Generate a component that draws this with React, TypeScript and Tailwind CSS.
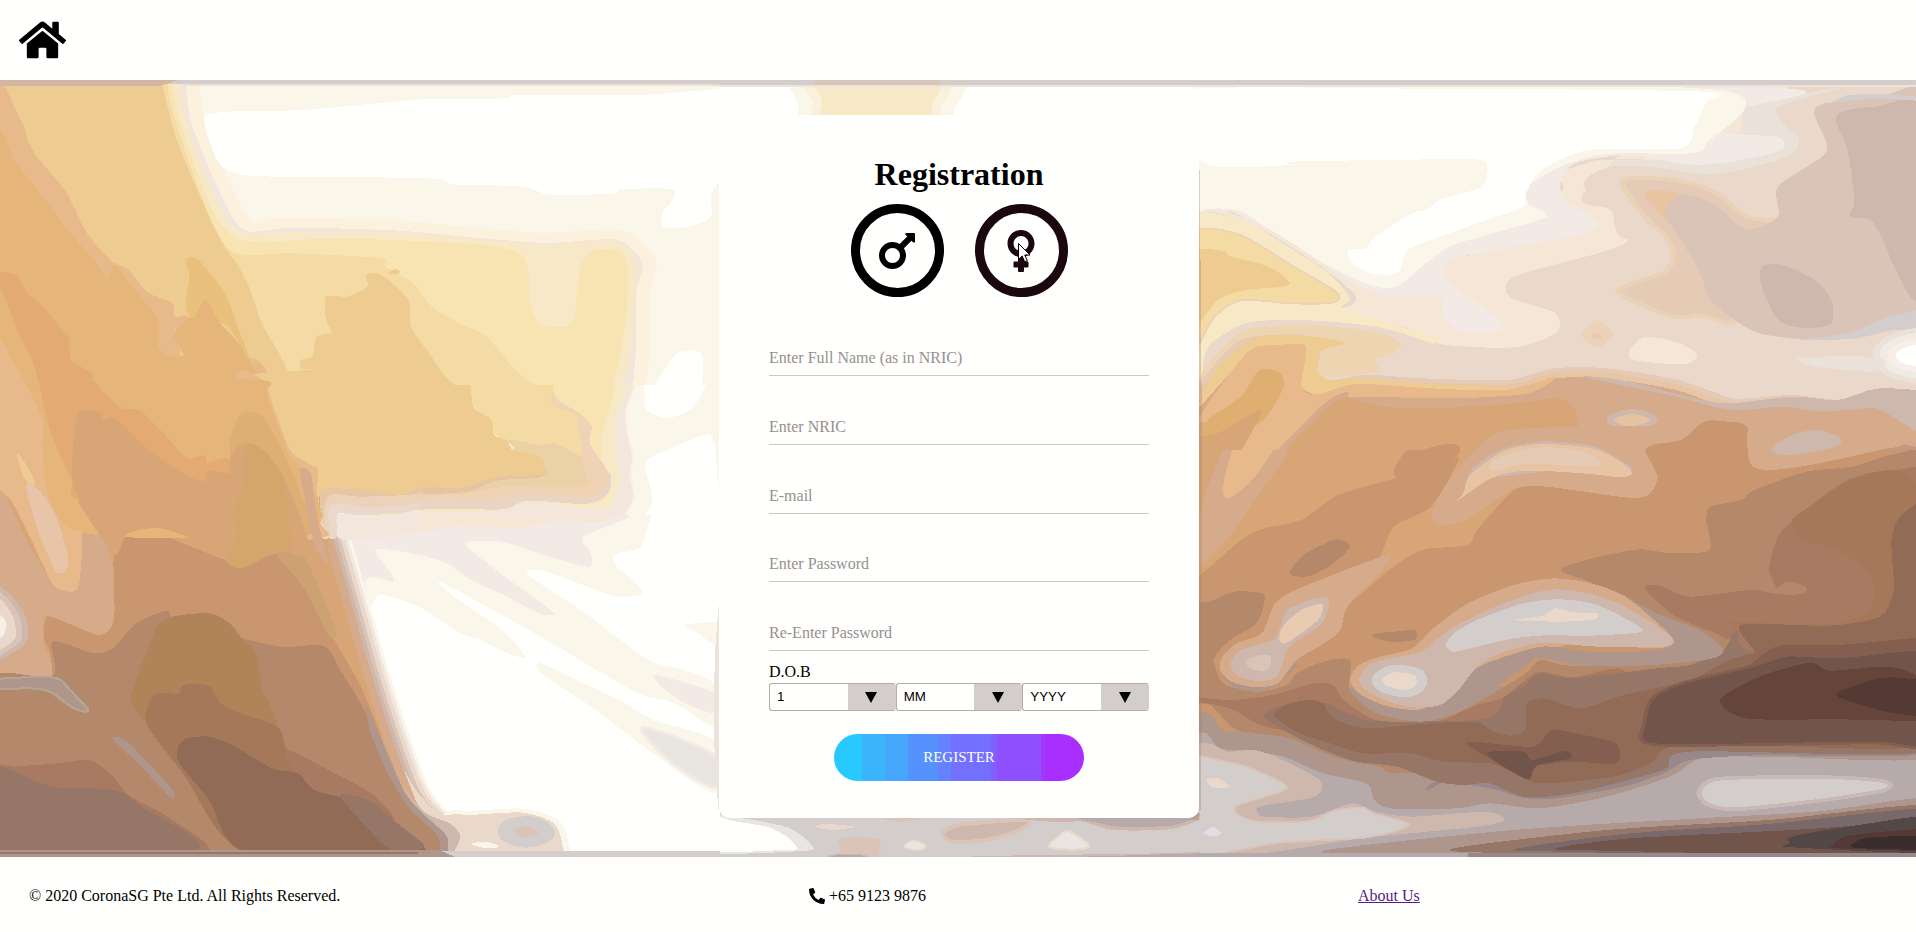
import React from "react";
import { FaHome, FaMars, FaVenus, FaPhoneAlt } from "react-icons/fa";

type Band = [string, number];

/* Closed Catmull-Rom curve through a flat "x,y x,y" list. */
function curve(points: string): string {
  const p = points.trim().split(/\s+/).map((s) => s.split(",").map(Number));
  const n = p.length;
  const t = 0.13;
  let d = `M${p[0][0]} ${p[0][1]}`;
  for (let i = 0; i < n; i++) {
    const a = p[(i - 1 + n) % n];
    const b = p[i];
    const c = p[(i + 1) % n];
    const e = p[(i + 2) % n];
    d += `C${b[0] + (c[0] - a[0]) * t} ${b[1] + (c[1] - a[1]) * t} ${c[0] - (e[0] - b[0]) * t} ${c[1] - (e[1] - b[1]) * t} ${c[0]} ${c[1]}`;
  }
  return d + "Z";
}

/* A filled blob with optional bands of colour around it, widest first. */
function B({ c, p, s = [] }: { c: string; p: string; s?: Band[] }) {
  const d = curve(p);
  return (
    <>
      {s.map(([color, w], i) => (
        <path key={i} d={d} fill={color} stroke={color} strokeWidth={w} strokeLinejoin="round" />
      ))}
      <path d={d} fill={c} />
    </>
  );
}

function UpperLeft() {
  return (
    <svg x="0" y="60" width="720" height="390" viewBox="0 0 1568 1170" preserveAspectRatio="none">
      <rect width="1568" height="1170" fill="#fbf6ea" />
      <B c="#f3e5db" s={[["#fbf1dc", 60]]} p="400,0 405,80 415,180 450,310 480,400 510,480 545,515 640,503 870,512 1010,530 1140,545 1200,549 1340,538 1385,580 1400,620 1385,700 1385,850 1380,950 1365,1060 1372,1250 -60,1250 -60,0" />
      <B c="#f7e8c8" p="385,0 392,80 405,180 440,320 470,410 500,490 545,522 640,516 870,518 1010,535 1140,550 1200,554 1335,542 1375,580 1388,620 1380,750 1372,900 1345,1020 1340,1250 -60,1250 -60,0" />
      <B c="#f7e4b2" p="370,0 375,80 390,170 430,340 470,470 510,530 560,545 700,537 860,540 1060,555 1130,580 1150,620 1155,730 1180,795 1245,790 1260,650 1275,590 1310,567 1350,575 1367,620 1365,750 1352,880 1330,1000 1310,1100 1308,1250 -60,1250 -60,0" />
      <B c="#ead2ad" p="1195,1000 1260,1050 1288,1100 1275,1130 1308,1200 1200,1250 1100,1130" />
      <B c="#f4dba5" p="360,0 365,80 380,170 420,340 460,480 500,570 545,585 640,580 830,595 840,620 900,670 940,740 1000,790 1060,830 1130,940 1200,1010 1260,1065 1265,1250 -60,1250 -60,0" />
      <B c="#eecb91" p="350,0 355,80 385,240 430,390 480,540 520,620 548,700 570,790 612,890 640,970 670,978 680,930 655,925 655,900 680,890 690,830 722,818 710,780 710,710 757,710 800,680 797,645 830,645 890,720 895,800 940,890 970,950 1030,1020 1035,1045 1075,1075 1080,1120 1170,1180 1180,1250 -60,1250 -60,0" />
      <B c="#eecb91" p="845,640 860,627 872,636 860,643" />
      <B c="#e7b98b" p="-20,110 45,180 60,240 80,290 130,370 150,410 190,520 240,600 280,630 320,695 375,730 380,768 410,770 410,805 378,810 400,850 400,890 560,900 600,1020 655,1200 500,1250 -40,1250" />
      <B c="#e5b57a" p="-20,240 40,320 110,440 160,530 205,600 235,650 250,615 300,700 345,780 345,860 375,890 400,885 378,820 415,770 448,718 480,790 520,850 550,920 580,1000 610,1110 640,1250 -40,1250" />
      <B c="#e9c07c" p="404,600 430,598 490,700 520,810 548,910 500,805 475,780 448,718 420,775 404,735 412,650" />
      <B c="#e3ab73" p="-20,640 35,645 60,700 95,740 135,810 150,830 155,900 200,940 220,1000 300,1050 360,1110 410,1170 440,1250 140,1250 100,1050 70,900 40,820 10,710" />
      <B c="#d8a676" p="175,1060 250,1075 300,1140 380,1250 160,1250 165,1130" />
      <B c="#e7b98b" p="-20,820 30,910 80,1040 135,1250 -20,1250" />
      <B c="#fffffd" p="450,165 510,154 660,150 820,130 920,118 1100,115 1130,105 1400,104 1700,90 1600,300 1550,400 1548,470 1500,500 1445,502 1443,455 1460,430 1465,388 1350,388 1340,400 1200,405 1140,380 990,373 960,358 870,353 600,350 520,343 480,315 460,260 447,200" />
      <B c="#fffffd" p="1475,880 1527,882 1528,980 1500,1050 1440,1075 1405,1040 1420,990" />
      <path d="M0 60H1568V72H0Z" fill="#d3cdcb" />
      <path d="M400 72H1568V79H400Z" fill="#ebe0d6" />
      <path d="M0 60H390L350 77H0Z" fill="#d3b5a5" />
    </svg>
  );
}

function LowerLeft() {
  return (
    <svg x="0" y="450" width="820" height="482" viewBox="0 30 1568 1446" preserveAspectRatio="none">
      <rect width="1568" height="1500" fill="#fffffd" />
      <B c="#fbf6ea" p="600,-20 1400,-60 1375,5 1240,40 1235,160 1248,200 1225,320 1180,340 1175,370 1225,445 1222,465 1175,468 1080,415 1030,390 1010,405 1120,520 1240,660 1310,690 1368,735 1368,860 1290,790 1220,760 1120,670 1000,560 845,428 860,460 960,570 1005,650 970,640 920,600 880,580 800,500 725,465 700,520 650,400" />
      <B c="#fbf6ea" p="1035,670 1130,740 1190,785 1250,840 1368,905 1368,1060 1240,930 1130,800 1035,700" />
      <B c="#fbf6ea" p="1310,555 1375,550 1375,620 1335,580" />
      <B c="#f3eae5" p="1255,705 1368,760 1368,820 1310,790 1265,740" />
      <B c="#e9e5e1" s={[["#f3eae5", 14]]} p="1230,868 1300,900 1368,955 1368,1040 1290,970" />
      <B c="#f3eae5" p="640,240 1190,215 1115,290 1130,340 1125,380 1050,350 960,305 890,310 940,380 1000,450 1060,520 1030,520 970,470 900,420 840,360 720,327 750,405 750,425 700,420 690,600 640,400" />
      <B c="#f5e6d6" p="600,-20 1210,-20 1205,90 1215,150 1190,200 1150,245 1060,240 1000,265 870,260 740,290 650,265 600,200" />
      <B c="#f7e8c6" p="560,-20 1180,-20 1180,120 1160,180 1130,198 1010,200 940,217 820,205 720,238 640,218 600,200" />
      <B c="#ead4c3" p="560,-20 1150,-20 1168,100 1150,165 1090,185 1000,182 930,207 800,205 640,218 605,210 590,100" />
      <B c="#f0d3ab" p="560,-20 1140,-20 1160,100 1140,140 960,160 900,180 770,185 680,165 640,175 600,200" />
      <B c="#eecb91" p="540,-20 975,-20 980,15 1045,70 1040,102 950,118 880,145 740,152 640,148 610,160 590,80" />
      <B
        c="#d8a676"
        s={[["#fbf6ea", 100], ["#f3e6dc", 88], ["#ead8cb", 76], ["#dac3b7", 60], ["#ceb8ad", 46], ["#d5ab8c", 32]]}
        p="560,200 580,100 592,130 600,190 625,320 645,430 665,540 690,680 712,790 735,900 765,1030 790,1100 835,1180 838,1260 -80,1260 -80,-60 300,-60"
      />
      <B c="#d8a676" p="130,-30 540,-30 592,130 625,320 440,330 280,270 150,180" />
      <B c="#d5a66c" p="435,40 480,10 520,30 545,280 560,350 460,370 425,355 460,290 445,150" />
      <B c="#d5ab8c" p="-40,60 20,200 60,330 110,440 150,430 155,200 200,300 220,420 215,550 190,585 130,550 85,530 85,620 100,710 -40,710" />
      <B c="#e7b98b" p="-40,-30 100,-30 140,110 155,200 157,330 150,440 130,455 100,430 60,300 20,180 -30,100" />
      <B c="#eecb91" p="32,45 40,50 66,120 60,140 45,110" />
      <B c="#e8c4a8" p="50,140 65,135 105,220 130,350 125,395 105,390 70,260" />
      <B c="#c9966f" p="245,285 300,280 350,310 430,360 460,372 530,342 560,380 595,430 640,600 690,740 740,950 760,1240 120,1240 100,690 85,600 90,530 130,550 190,585 218,540 218,340" />
      <B c="#cda272" p="545,280 580,340 640,560 630,590 580,440 530,345" />
      <B c="#b4896b" p="100,605 180,640 220,620 260,550 320,512 335,540 450,590 540,620 620,618 650,690 690,790 730,930 770,1090 810,1240 -40,1240 -40,730 100,710" />
      <B c="#b08359" p="300,560 330,530 400,520 440,550 460,590 490,640 500,740 530,860 450,870 300,880 280,850 250,780 265,700 290,600" />
      <B c="#a6785a" p="295,765 340,760 350,735 400,738 430,800 530,860 550,930 620,1000 700,1060 740,1120 800,1240 470,1240 350,1000 280,850" />
      <B c="#a87a61" p="550,930 640,1000 710,1060 760,1150 700,1150 600,1050 560,990" />
      <B c="#926b57" p="350,900 400,890 450,920 520,985 570,1000 600,1050 670,1080 720,1130 800,1215 790,1245 470,1235 400,1080 340,960" />
      <B c="#967667" p="650,1065 710,1085 760,1150 810,1220 750,1230 700,1160" />
      <B c="#a87a61" p="-20,990 30,980 110,970 170,960 210,1000 250,1070 320,1130 390,1245 -20,1240" />
      <B c="#967667" p="-30,985 20,990 100,1040 220,1050 270,1100 375,1230 -40,1260" />
      <B c="#ae968c" s={[["#b5a393", 12]]} p="-20,722 100,715 130,750 165,810 140,800 100,755 60,742 -20,745" />
      <B c="#ae968c" p="215,895 240,900 290,980 330,1050 328,1075 270,980" />
      <B c="#ead8cb" s={[["#ceb8ad", 46], ["#dac3b7", 24]]} p="-30,460 0,475 25,530 30,590 10,620 -30,640" />
      <B c="#f8efe6" p="-30,500 10,540 5,590 -30,600" />
      <B c="#ead8cb" s={[["#fbf6ea", 24]]} p="860,1130 900,1125 1000,1118 1060,1150 1075,1215 1060,1245 850,1245" />
      <B c="#ead8cb" p="775,1000 800,1060 840,1120 900,1130 920,1170 880,1240 840,1240" />
      <B c="#ceb8ad" p="770,1040 815,1120 860,1150 880,1190 860,1250 820,1250 830,1190" />
      <B c="#ae968c" p="700,800 730,900 775,1060 815,1130 855,1190 850,1250 800,1250 720,950" />
      <B c="#b4896b" p="700,850 735,980 780,1100 835,1185 838,1250 780,1250" />
      <B c="#926b57" p="700,1120 760,1160 805,1215 805,1245 600,1245" />
      <B c="#967667" p="650,1065 710,1085 760,1150 812,1220 750,1230 700,1160" />
      <B c="#dac3b7" s={[["#d3cdcb", 62]]} p="985,1165 1015,1160 1030,1180 1005,1192 985,1182" />
      <B c="#fbf6ea" p="900,1212 930,1205 955,1220 930,1225" />
      <path d="M0 1229H840L870 1251H0Z" fill="#ae968c" />
      <path d="M0 1236H800V1243H0Z" fill="#967667" />
      <path d="M845 1234H1568V1251H870Z" fill="#d3cdcb" />
      <path d="M1368 620Q1360 900 1374 1110V500Z" fill="#ebe4dd" />
    </svg>
  );
}

/* Corner of the sunlit window and the top of the brown curtain. */
function LeftMiddle() {
  return (
    <>
      <svg x="372" y="385" width="347" height="130" viewBox="-204 -15 1041 390">
        <B c="#fbf6ea" p="560,-40 860,-40 860,400 530,400 570,200" />
        <B c="#f3e6dc" s={[["#fbf1dc", 12]]} p="100,-60 558,-60 555,60 558,120 576,200 568,255 580,320 555,370 525,430 300,430 -250,430 -250,300" />
        <B c="#f7e8c6" p="100,-60 545,-60 525,90 530,200 540,280 515,340 480,358 260,335 200,360 0,368 -250,375 -250,300" />
        <B c="#ead4c3" p="495,240 512,290 490,325 430,342 260,332 190,358 0,356 -250,366 -250,290 300,250" />
        <B c="#f0d3b5" p="330,0 350,20 420,70 455,110 450,160 500,240 500,290 460,320 380,320 250,310 150,330 0,328 -250,336 -250,300 200,200" />
        <B c="#f7e4b2" p="340,-60 520,-60 505,70 485,130 483,210 455,160 455,110 420,70 350,25" />
        <B c="#f4dba3" p="50,-60 330,-60 335,40 410,75 415,120 425,195 370,185 300,165 200,155 150,110" />
        <B c="#ead2a6" p="205,150 300,165 340,160 420,200 435,250 430,290 200,290 60,312 -250,318 -250,280 200,200" />
        <B c="#e5c3a4" p="-250,290 100,270 310,240 300,262 170,272 60,308 -250,312" />
        <B c="#eecb91" p="60,-60 100,50 155,90 162,135 200,150 220,180 300,200 318,240 300,255 170,262 60,294 -30,292 -250,296 -250,-60" />
        <B c="#fffffd" p="625,-60 805,-60 760,50 680,85 620,60 615,20" />
        <B c="#fffffd" p="635,200 680,180 790,135 815,140 828,200 825,440 605,430 637,330 615,230" />
      </svg>
      <g transform="translate(0 390) scale(.33333)">
        <B c="#f3e6dc" p="1000,380 1060,370 1180,378 1250,358 1250,420 1030,450" />
        <B c="#ead8cb" p="985,345 1080,330 1250,330 1250,358 1180,372 1060,374 1012,372 1010,440 985,440" />
        <B c="#ecd2b8" p="962,340 990,305 1250,300 1250,338 1110,352 1010,340 985,370 990,440 965,440" />
        <B c="#e7c6a6" p="960,320 985,293 1250,290 1250,312 1080,320 1000,312 975,340 970,400" />
        <B c="#eecb91" p="700,-30 1250,-30 1250,292 1080,298 985,294 960,310 955,360 930,260" />
        <B c="#e7b98b" p="700,-30 790,-30 810,20 870,180 930,223 955,240 950,310 960,400 975,440 700,440" />
        <B c="#e5b57a" p="260,-30 778,-30 800,10 830,100 870,200 905,240 930,420 220,420 130,100" />
        <B c="#deaf74" p="690,180 695,130 725,70 780,75 820,130 870,230 910,330 940,430 700,430" />
        <B c="#e3ab73" p="128,-30 270,-30 310,5 365,55 420,62 500,140 560,205 615,195 620,218 680,205 700,250 600,330 240,330 215,270 150,120" />
        <B c="#d8a676" p="235,70 300,68 310,92 345,85 440,175 540,245 610,275 625,240 685,250 690,205 720,165 760,160 810,200 850,260 900,380 935,490 900,500 831,480 720,525 675,510 570,445 480,415 384,430 350,495 310,450 243,350 235,320 218,270 218,180" />
        <B c="#d5a66c" p="735,200 750,160 800,190 850,270 870,420 875,480 831,485 725,535 680,510 715,440 700,370 730,290" />
        <B c="#d5ab8c" p="900,240 932,250 945,340 960,420 985,520 950,480 925,380" />
      </g>
    </>
  );
}

function UpperRight() {
  return (
    <svg x="1190" y="60" width="726" height="390" viewBox="0 0 1568 1170" preserveAspectRatio="none">
      <rect width="1568" height="1170" fill="#ead8cb" />
      <B c="#eae1d9" p="1190,140 1290,110 1400,85 1270,140 1280,190 1313,230 1310,270 1270,300 1130,342 950,320 870,330 880,300 1150,290" />
      <B c="#f5e6d6" p="300,620 560,590 640,570 800,400 800,340 900,300 1150,290 1190,160 1290,80 1100,80 850,400 910,450 945,540 880,580 700,650 690,710 790,760 790,820 700,862 540,852 460,800 300,760" />
      <B c="#ead8cb" p="850,370 870,340 920,318 1000,322 1130,345 1290,310 1260,480 950,540 910,450 860,395" />
      <B c="#eae1d9" p="1190,145 1245,120 1280,190 1300,230 1240,225 1190,210" />
      <B c="#f3eae5" p="0,80 1280,85 1180,150 1150,215 1270,232 1270,275 1100,315 950,285 830,310 800,370 810,420 865,470 865,515 640,577 560,600 555,660 670,780 668,810 630,820 580,810 545,770 540,710 420,707 340,660 190,540 90,455 0,460" />
      <B c="#f5e6d6" p="1250,95 1200,135 1190,210 1165,220 1150,190 1180,140" />
      <B c="#fbf6ea" p="-20,80 1140,90 1115,250 1080,280 900,282 800,320 730,380 730,430 770,470 640,525 560,560 500,620 450,678 400,680 330,640 200,540 120,460 60,445 -20,450" />
      <B c="#fffffd" p="-20,90 500,86 1110,95 1112,130 1090,200 1060,265 860,270 760,330 725,400 720,440 640,480 560,520 470,570 450,638 390,640 345,600 345,570 380,565 400,530 480,460 510,450 540,420 590,400 635,375 637,305 550,298 220,305 215,315 40,315 -20,200" />
      <B c="#ead8cb" s={[["#f4e7da", 20]]} p="20,480 110,480 200,545 330,670 340,740 20,850" />
      <B c="#f7e8c6" p="0,490 110,480 200,550 300,640 345,715 330,745 430,790 540,845 400,870 200,880 0,950" />
      <B c="#ead8cb" p="120,790 240,780 400,800 520,850 540,900 300,950 100,880 30,960 40,860" />
      <B c="#edd5b2" p="130,805 250,795 400,815 455,850 440,880 400,900 405,935 280,950 250,870 90,860 20,1000 25,940 80,850" />
      <B c="#f4dba3" s={[["#ead2bb", 10]]} p="0,535 100,523 220,620 312,695 310,725 220,728 110,718 50,770 0,870" />
      <B c="#eecb91" p="0,585 70,572 90,590 170,620 215,665 200,680 120,690 60,720 0,810" />
      <B
        c="#d5ab8c"
        s={[["#e5cab5", 60], ["#e7c6a6", 34]]}
        p="0,1060 60,960 120,870 180,855 250,860 240,970 270,1000 380,975 500,985 690,990 790,955 900,955 1050,990 1170,1045 1300,1035 1400,1050 1500,1045 1700,1120 1600,1250 -40,1250"
      />
      <B c="#ceb8ad" p="850,950 940,962 1060,1005 1160,1030 1300,1010 1400,1020 1490,985 1620,1010 1620,1150 1540,1090 1480,1045 1370,1055 1280,1040 1170,1050 1050,1010" />
      <B c="#eecb91" p="20,1040 60,920 150,830 270,830 335,850 285,870 275,930 300,960 360,955 500,970 690,985 600,1000 360,980 280,1003 240,980 245,880 140,870" />
      <B c="#e7b98b" p="20,1080 60,990 130,870 190,855 250,860 240,980 275,1003 360,972 520,985 680,990 790,950 730,1000 570,1015 320,1015 250,1090 170,1220 80,1220 60,1100" />
      <B c="#deaf70" p="150,930 195,940 200,990 150,1090 40,1150 30,1090 110,1010" />
      <B c="#d8a676" p="0,1140 60,1120 150,1050 140,1100 80,1220 -20,1220" />
      <B c="#d5ab8c" p="310,1010 260,1070 160,1220 210,1220 340,1010" />
      <B c="#d8a676" p="330,1015 420,1040 530,1045 700,1030 800,1015 835,1060 832,1112 750,1112 680,1130 600,1250 190,1250 270,1080" />
      <B c="#c9966f" p="460,1210 520,1162 580,1157 580,1250 460,1250" />
      <B c="#c9966f" p="1110,1085 1160,1085 1205,1105 1205,1250 985,1250 988,1160 1060,1142" />
      <B c="#e5c3a1" s={[["#ceb8ad", 30]]} p="915,1078 955,1062 995,1078 970,1095 940,1098" />
      <B c="#c09a86" p="1450,1190 1530,1152 1600,1180 1600,1250 1450,1250" />
      <B c="#e5cab5" s={[["#ead2b8", 24]]} p="940,370 990,360 1060,370 1130,400 1200,475 1270,490 1200,510 1100,420 1050,420 1030,480 1080,560 1110,650 1170,780 1110,762 1040,762 935,700 950,680 1030,640 1050,590 1035,530 990,470" />
      <B c="#e8c4a0" p="980,400 1010,390 1060,405 1030,445 1060,525 1000,440" />
      <B c="#dac3b7" p="1620,110 1480,115 1370,130 1348,160 1375,250 1365,290 1270,380 1270,470 1210,510 1180,490 1130,430 1060,403 1025,460 1060,540 1095,620 1110,670 1130,730 1220,815 1330,838 1430,830 1500,790 1620,760" />
      <B c="#d3cdcb" p="1220,820 1330,836 1430,815 1500,775 1620,740 1620,810 1520,810 1440,835 1330,840" />
      <B c="#ceb8ad" p="1620,145 1480,140 1410,155 1395,185 1420,270 1435,420 1425,470 1470,480 1500,550 1520,620 1560,715 1620,725" />
      <B c="#ceb8ad" p="1235,620 1280,615 1350,660 1385,720 1385,790 1330,805 1270,780 1235,680" />
      <B c="#f5e6d6" p="950,870 980,832 1040,842 1095,880 1070,913 960,900" />
      <B c="#ecd2b8" p="845,825 880,780 913,825 880,863" />
      <path d="M868 820h20v16h-20z" fill="#e5cab5" />
      <B c="#fffffd" s={[["#eae1d9", 100], ["#f0ebe5", 70], ["#f8f0e8", 34]]} p="1620,855 1555,858 1525,882 1540,910 1620,925" />
      <B c="#eae1d9" p="1313,895 1440,888 1500,900 1480,935 1350,920" />
      <path d="M0 60H1568V75H0Z" fill="#d3cdcb" />
      <path d="M0 75H1568V80H0Z" fill="#ede3da" />
      <path d="M1420 105Q1500 98 1568 110V122Q1450 108 1370 135Z" fill="#d3cdcb" />
    </svg>
  );
}

function LowerRight() {
  return (
    <svg x="1190" y="450" width="726" height="482" viewBox="0 30 1568 1446" preserveAspectRatio="none">
      <rect width="1568" height="1500" fill="#c9966f" />
      <B c="#d8a676" p="0,-30 560,-30 580,20 570,60 430,120 320,165 240,240 160,265 110,300 30,395 0,400" />
      <B c="#d8a676" p="590,-30 580,60 520,200 440,260 410,350 350,480 430,390 500,330 600,315 620,270 700,150 760,130 800,60" />
      <B c="#c9966f" p="480,20 580,15 570,60 500,150 440,100" />
      <B c="#d5ab8c" p="100,-30 235,-30 130,200 90,280 20,375 20,220" />
      <B c="#e7b98b" p="110,-30 200,-30 140,110 85,175 70,150 85,60" />
      <B c="#b4896b" p="1620,60 1530,40 1430,80 1330,95 1220,150 1190,180 1125,200 1115,240 1122,330 1040,340 970,328 870,355 800,390 870,430 1000,520 1100,600 1180,650 1620,650" />
      <B c="#b4896b" p="245,345 315,298 345,320 310,370 260,408 215,402" />
      <B c="#b4896b" p="392,585 440,575 487,572 485,600 430,605" />
      <B c="#a87a61" p="985,435 1020,440 1080,470 1210,450 1270,460 1250,390 1270,290 1310,230 1420,120 1520,90 1640,120 1640,640 1200,640 1150,590 1050,530 990,460" />
      <B c="#b4896b" p="1262,460 1290,425 1330,440 1325,462" />
      <B c="#a6785a" p="1300,240 1340,200 1430,120 1520,90 1570,160 1570,540 1200,555 1180,545 1400,550 1470,500 1470,410 1400,330 1320,300" />
      <path d="M0 880H1568V1400H0Z" fill="#b6abaa" />
      <g transform="translate(0 450) scale(.72 1)">
        <B c="#b4896b" p="0,60 60,35 130,5 210,8 225,25 200,100 120,150 70,210 60,300 0,300" />
        <B c="#ae968c" p="0,365 60,372 130,425 400,300 2250,300 2250,500 1750,500 1560,500 1500,520 1440,560 1250,620 1050,655 900,640 800,655 600,655 550,625 530,580 400,550 280,500 180,482 90,475 50,430 0,420" />
        <B c="#99888a" p="715,600 740,575 900,595 1000,624 1100,625 1300,590 1420,550 1500,510 1700,496 2250,485 2250,300 1400,300 900,500" />
        <B c="#b4896b" p="0,200 60,200 100,280 200,305 290,285 320,250 400,215 480,210 480,300 560,370 700,395 820,360 1000,255 1050,210 1150,228 1400,212 1640,150 1640,400 700,545 560,528 430,500 300,445 200,430 130,415 60,345 0,335" />
        <B c="#a87a61" p="0,320 120,330 250,315 370,280 430,285 460,330 560,390 730,398 860,345 935,325 1000,275 1050,245 1150,262 1300,240 1300,400 500,430 280,420 200,400 120,355 0,330" />
        <B c="#967667" p="220,375 300,340 410,340 450,360 530,390 640,395 860,390 920,370 945,320 1000,290 1050,250 1150,265 1400,235 1500,225 1600,180 1640,120 1700,190 2250,250 2250,480 1500,485 1420,540 1150,610 1000,620 900,580 820,585 740,575 620,530 500,515 400,480 280,420" />
        <B c="#926b57" p="250,375 300,340 370,330 405,345 410,360 440,390 530,415 720,400 860,397 910,425 960,437 1005,420 1010,340 1060,325 1110,340 1160,355 1200,350 1300,315 1500,270 1690,190 2250,150 2250,460 1500,460 1380,520 1270,560 1050,580 960,545 900,520 760,515 660,490 520,490 420,460 330,430" />
      </g>
      <B c="#926b57" p="1640,180 1540,220 1515,300 1520,450 1490,530 1380,557 1190,555 1220,640 1190,700 1640,700" />
      <B c="#845e4e" p="600,905 740,920 780,870 830,880 920,910 920,970 830,965 740,980 720,1010 640,950" />
      <B c="#71544a" p="640,940 720,935 740,960 810,932 822,955 750,975 735,1015 715,1010" />
      <B c="#845e4e" p="1200,690 1270,618 1400,615 1640,590 1640,660 1200,720" />
      <B c="#71544a" s={[["#845e4e", 16]]} p="985,905 985,850 1000,780 1060,735 1220,680 1290,650 1400,655 1640,645 1640,915 1480,905 1100,912" />
      <B c="#65443a" p="1145,780 1230,710 1340,668 1380,692 1500,680 1560,700 1640,780 1640,840 1400,838 1200,835" />
      <B c="#553934" p="1395,765 1440,735 1510,712 1640,740 1640,830 1530,822 1450,795" />
      <B c="#ae968c" p="355,740 380,790 430,820 530,828 590,790 660,740 740,655 600,700" />
      <B c="#d5ab8c" p="345,720 365,675 410,650 480,625 530,560 600,490 700,435 790,415 880,435 960,485 1050,590 1010,625 800,618 560,760 500,808 430,800 370,765" />
      <B c="#ae968c" p="640,670 760,620 860,635 1000,632 1045,600 960,490 900,435 1000,515 1100,570 1150,625 1130,655 1000,675 850,678 760,655 700,670 640,740 540,800 600,710" />
      <B
        c="#ceb8ad"
        p="365,720 385,675 430,655 500,635 560,570 650,505 770,450 860,460 940,500 1040,592 1020,620 880,620 760,608 670,640 620,680 580,750 540,795 480,802 420,780 380,750"
      />
      <B c="#d3cdcb" p="552,615 570,580 620,540 720,490 800,478 880,495 970,560 965,578 850,588 780,585 700,595 620,620 570,635" />
      <B c="#ead8cb" p="700,540 760,528 790,505 830,517 878,520 875,538 800,545" />
      <B c="#ead8cb" s={[["#d3cdcb", 44]]} p="415,718 440,697 485,705 488,735 465,750 425,738" />
      <B c="#ae968c" p="70,700 100,745 150,752 190,735 230,670 150,700" />
      <B c="#d5ab8c" p="65,690 70,650 100,610 155,580 190,480 290,415 428,345 415,390 340,500 325,570 290,610 230,660 190,730 140,742 90,725" />
      <B c="#ceb8ad" p="88,670 110,630 180,600 195,560 210,510 270,475 300,480 285,550 215,620 200,670 185,715 140,722 100,705" />
      <B c="#e8cbb0" p="193,600 200,560 240,510 285,492 280,535 240,580 205,610" />
      <B c="#dac3b7" p="120,665 150,645 175,650 168,690 135,688" />
      <B c="#ceb8ad" p="-20,930 40,910 80,935 140,930 200,960 280,1020 270,1070 150,1100 160,1125 260,1130 350,1090 400,1115 480,1130 640,1115 680,1140 620,1160 400,1190 0,1245" />
      <B c="#d3cdcb" s={[["#dac3b7", 10]]} p="-20,965 80,968 150,998 205,1040 180,1060 100,1095 100,1125 150,1148 260,1145 310,1115 370,1105 400,1125 470,1155 380,1190 200,1205 -20,1235" />
      <B c="#b6abaa" p="150,1115 200,1100 290,1070 340,1085 300,1115 250,1132 160,1130" />
      <B c="#ead8cb" p="35,1020 60,1015 85,1040 50,1043" />
      <B c="#e3dbe6" p="30,1180 50,1160 68,1180 50,1190" />
      <B c="#d3cdcb" s={[["#c4bac0", 22], ["#ceb8ad", 12]]} p="1105,1055 1130,1025 1200,1018 1400,1018 1500,1030 1490,1048 1350,1078 1180,1102 1120,1088" />
      <B c="#ae968c" p="290,1232 700,1170 1100,1135 1350,1115 1640,1075 1640,1260 500,1250" />
      <B c="#967667" p="570,1225 900,1170 1250,1140 1640,1095 1640,1260 700,1240" />
      <B c="#79696a" p="710,1225 950,1180 1250,1152 1640,1105 1640,1250 800,1235" />
      <B c="#71544a" p="790,1225 950,1195 1300,1170 1500,1150 1640,1130 1640,1245 900,1232" />
      <B c="#544846" p="1295,1210 1300,1190 1420,1160 1640,1125 1640,1235 1300,1222" />
      <B c="#553934" p="1390,1215 1430,1185 1640,1165 1640,1230 1400,1225" />
      <B c="#3a2d2d" p="1428,1215 1470,1192 1640,1190 1640,1228 1450,1225" />
      <path d="M600 1240H1568V1251H600Z" fill="#99888a" />
      <path d="M0 1240H600V1251H0Z" fill="#b6abaa" />
    </svg>
  );
}

/* Highlights on the right-hand rock. */
function RightMiddle() {
  return (
    <g transform="translate(1190 440) scale(.46301 .33333)">
      <B c="#d5ab8c" p="690,-30 1000,-40 1040,0 990,20 985,40 1010,110 990,165 940,172 770,140 700,145 650,190 590,245 530,253 525,205 560,120 610,40" />
      <B c="#c9966f" p="1000,15 1060,0 1110,-50 1160,-50 1205,-30 1205,70 1100,100 1015,90 988,45" />
      <B c="#ceb8ad" p="600,130 610,85 670,30 760,4 870,18 935,65 950,90 800,90 620,120" />
      <B c="#e8c4a4" p="590,160 605,105 680,32 760,12 870,25 930,65 955,100 930,112 850,100 720,92 650,115 575,185" />
      <B c="#e5cab5" p="645,85 670,50 760,22 850,35 885,65 880,78 720,72 670,90" />
      <B c="#d5ab8c" p="1205,-30 1240,-60 1480,-60 1540,10 1490,30 1340,75 1250,90 1210,70" />
      <B c="#ceb8ad" p="1258,20 1300,-15 1350,-30 1402,-10 1395,20 1300,45 1265,40" />
    </g>
  );
}

function Backdrop() {
  return (
    <svg className="absolute inset-0 h-full w-full" viewBox="0 80 1916 777" preserveAspectRatio="none" shapeRendering="crispEdges" aria-hidden="true">
      <rect y="80" width="1916" height="777" fill="#fffffd" />
      <UpperLeft />
      <LowerLeft />
      <LeftMiddle />
      <UpperRight />
      <LowerRight />
      <RightMiddle />
      <svg x="719" y="80" width="472" height="38" viewBox="719 80 472 38">
        <rect x="719" y="80" width="472" height="38" fill="#fffffd" />
        <B c="#f7e8c6" s={[["#fbf6ea", 44], ["#faf0dc", 18]]} p="815,70 822,100 825,130 925,130 932,105 940,70" />
        <path d="M719 80H1191V85H719Z" fill="#d3cdcb" />
        <path d="M719 85H1191V87H719Z" fill="#ede3da" />
        <path d="M815 80H940V85H815Z" fill="#d8c6bb" />
      </svg>
      <svg x="720" y="812" width="480" height="45" viewBox="60 516 1440 135">
        <rect x="60" y="516" width="1440" height="135" fill="#d3cdcb" />
        <B c="#e9e5e1" p="0,500 75,530 150,538 270,565 335,615 310,633 0,633" />
        <B c="#fffffd" p="0,500 60,530 110,545 200,560 260,590 290,622 270,629 0,629" />
        <B c="#ead8cb" p="345,560 380,552 465,560 400,570" />
        <B c="#dac3b7" p="415,600 450,592 540,597 535,630 540,655 400,655 425,630" />
        <B c="#ceb8ad" s={[["#dac3b7", 24]]} p="735,580 780,560 920,548 980,548 930,575 850,595 760,600" />
        <B c="#dac3b7" p="550,535 660,535 600,546" />
        <B c="#e9e5e1" s={[["#ead8cb", 10]]} p="615,620 640,604 675,618 655,628" />
        <B c="#e9e5e1" s={[["#ead8cb", 12]]} p="1050,618 1080,590 1100,575 1130,590 1165,618 1120,626" />
        <B c="#ceb8ad" p="980,534 1070,546 1150,545 1240,570 1420,566 1500,520" />
        <B c="#b6abaa" p="1140,530 1200,550 1260,560 1420,556 1490,520" />
        <B c="#b6abaa" s={[["#ceb8ad", 8]]} p="385,655 410,646 480,646 500,655" />
        <path d="M760 651L1000 645L1300 642L1500 636V651Z" fill="#ceb8ad" />
        <path d="M1100 651L1300 646L1500 640V651Z" fill="#b6abaa" />
      </svg>
      <path d="M1199 130Q1204 500 1201 810L1190 820H1199Z" fill="#a9806a" fillOpacity=".35" />
    </svg>
  );
}

function TextField({ label, type = "text" }: { label: string; type?: string }) {
  return (
    <input
      type={type}
      placeholder={label}
      className="mb-[37.8px] block h-[31px] w-full rounded-none border-b border-[#cdc8c7] bg-transparent pb-[4px] text-[16px] leading-[18px] placeholder:text-[#969090] focus:outline-none"
    />
  );
}

function DateSelect({ value }: { value: string }) {
  return (
    <div className="flex h-7 flex-1 overflow-hidden rounded-[3px] border border-[#b6abaa] border-r-[#d3cdcb] font-['Liberation_Sans',Arial,sans-serif] text-[13.33px]">
      <span className="flex-1 pl-[7px] leading-[25px]">{value}</span>
      <span className="flex w-[47px] items-center justify-center bg-[#d3cdcb]">
        <svg width="12" height="11" viewBox="0 0 12 11" className="mt-[2px]">
          <path d="M0 0H12L6 11Z" />
        </svg>
      </span>
    </div>
  );
}

export default function App() {
  return (
    <div className="flex h-[932px] w-[1916px] flex-col overflow-hidden bg-[#fffffd] font-['Liberation_Serif','Times_New_Roman',serif] text-[16px] text-black">
      <header className="flex h-20 shrink-0 items-center pl-[19px]">
        <a href="#home" aria-label="Home">
          <FaHome className="h-[42px] w-[47px]" />
        </a>
      </header>

      <main className="relative h-[777px] shrink-0">
        <Backdrop />
        <div className="relative flex justify-center pt-[35px]">
          <form className="ml-[2px] h-[703px] w-[480px] rounded-[10px] bg-[#fffffd] px-[50px] pt-[41px]">
            <h1 className="text-center text-[32px] leading-[37px] font-bold">Registration</h1>
            <div className="mt-[11px] flex justify-center gap-[31px]">
              <div className="flex size-[93px] items-center justify-center rounded-full border-[9px] border-black">
                <FaMars className="size-12" />
              </div>
              <div className="relative flex size-[93px] items-center justify-center rounded-full border-[9px] border-[#1b080f] text-[#1b080f]">
                <FaVenus className="size-12" />
                <svg className="absolute top-[30px] left-[34px]" width="13" height="20" viewBox="0 0 13 20">
                  <path d="M.5 .5V16.5L4.2 13L6.7 18.8L9.3 17.7L6.8 12H12Z" fill="#fffffd" stroke="#000" strokeWidth="1" />
                </svg>
              </div>
            </div>

            <div className="mt-[48px]">
              <TextField label="Enter Full Name (as in NRIC)" />
              <TextField label="Enter NRIC" />
              <TextField label="E-mail" type="email" />
              <TextField label="Enter Password" />
              <TextField label="Re-Enter Password" />
            </div>

            <div className="-mt-[27px] leading-[20px]">D.O.B</div>
            <div className="mt-px flex">
              <DateSelect value="1" />
              <DateSelect value="MM" />
              <DateSelect value="YYYY" />
            </div>

            <button
              type="button"
              className="mx-auto mt-[23px] block h-[47px] w-[250px] rounded-full bg-[linear-gradient(to_right,#28c9ff_28px,#3ab5fc_28px_51px,#46a6fc_51px_74px,#5592fe_74px_104px,#6482fd_104px_117px,#7370ff_117px_157px,#8060ff_157px_163px,#8f50ff_163px_207px,#a237ff_207px_211px,#a82fff_211px)] text-[15px] text-white"
            >
              REGISTER
            </button>
          </form>
        </div>
      </main>

      <footer className="flex flex-1 items-start pt-[30px] leading-[18px]">
        <p className="w-[809px] pl-[29px]">© 2020 CoronaSG Pte Ltd. All Rights Reserved.</p>
        <p className="flex w-[549px] items-center gap-1">
          <FaPhoneAlt className="size-4" />
          +65 9123 9876
        </p>
        <a href="#about" className="text-[#551a8b] underline">
          About Us
        </a>
      </footer>
    </div>
  );
}
